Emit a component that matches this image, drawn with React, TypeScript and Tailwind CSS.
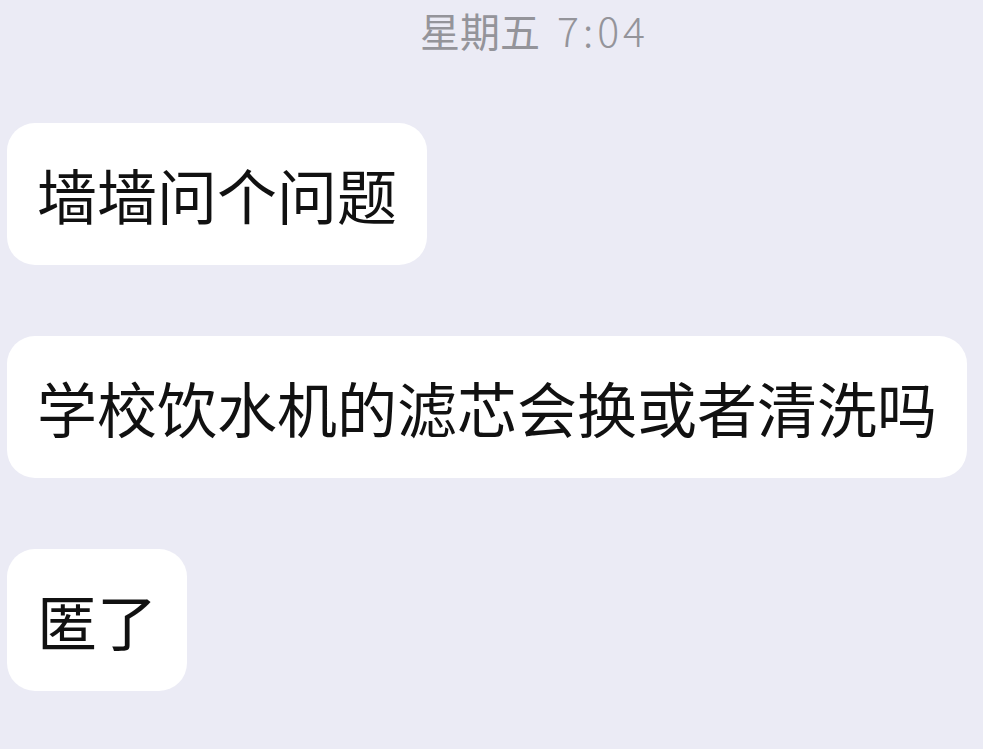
export default function App() {
  const messages = ['墙墙问个问题', '学校饮水机的滤芯会换或者清洗吗', '匿了']

  return (
    <div
      className="w-[983px] h-[749px] overflow-hidden bg-[#ebebf5]"
      style={{ fontFamily: '"Noto Sans CJK SC", "Noto Sans", sans-serif' }}
    >
      <div className="flex items-baseline pt-[5px] pl-[420px] text-[40px] leading-[48px] text-[#94949a]">
        <span>星期五</span>
        <span className="ml-[17px] text-[41px] font-light tracking-[4px]">7:04</span>
      </div>

      <div className="flex flex-col items-start gap-[71px] pl-[7px] pt-[69px]">
        {messages.map((text) => (
          <div
            key={text}
            className="flex h-[142px] items-center rounded-[28px] bg-white px-[30px] text-[60px] leading-none text-[#111111] whitespace-nowrap"
          >
            {text}
          </div>
        ))}
      </div>
    </div>
  )
}
